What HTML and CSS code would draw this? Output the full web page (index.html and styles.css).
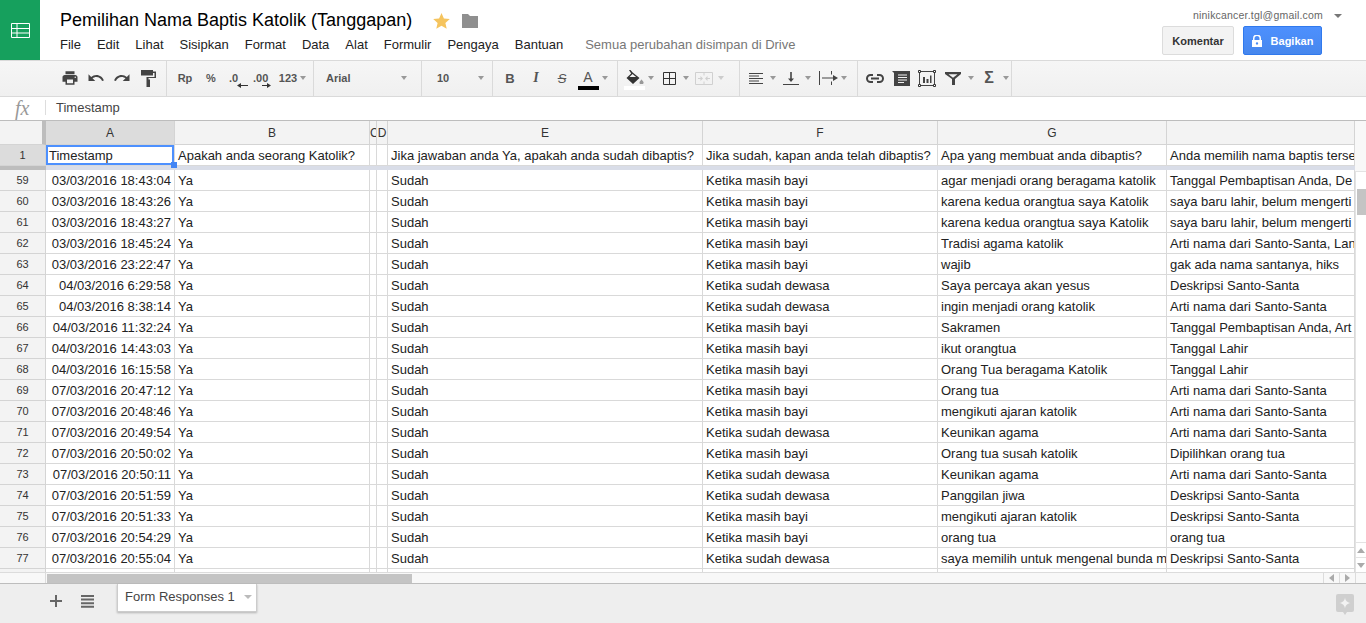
FILE: index.html
```html
<!DOCTYPE html>
<html lang="en">
<head>
    <meta charset="UTF-8">
    <meta name="viewport" content="width=device-width, initial-scale=1.0">
    <title>Pemilihan Nama Baptis Katolik (Tanggapan)</title>
    <link rel="stylesheet" href="styles.css">
</head>
<body>
    <div class="app">
        <!-- Header -->
        <header class="header">
            <div class="logo">
                <svg width="19" height="15" viewBox="0 0 19 15"><path fill="none" stroke="#fff" d="M.5.5h18v14H.5zM.5 5.500h18M.5 10h18M6 .5v14"/></svg>
            </div>
            <div class="title-block">
                <div class="title-row">
                    <h1>Pemilihan Nama Baptis Katolik (Tanggapan)</h1>
                    <svg class="star" width="17" height="16" viewBox="0 0 17 16"><path fill="#f5c45e" d="M8.500 0l2.400 5.400 5.900.6-4.400 3.900 1.300 5.800-5.200-3-5.200 3 1.300-5.800L.2 6l5.900-.6z"/></svg>
                    <svg class="folder" width="16" height="14" viewBox="0 0 16 14"><path fill="#8f8f8f" d="M0 0h6l2 2h8v12H0z"/></svg>
                </div>
                <nav class="menu">
                    <a>File</a>
                    <a>Edit</a>
                    <a>Lihat</a>
                    <a>Sisipkan</a>
                    <a>Format</a>
                    <a>Data</a>
                    <a>Alat</a>
                    <a>Formulir</a>
                    <a>Pengaya</a>
                    <a>Bantuan</a>
                    <span class="save-status">Semua perubahan disimpan di Drive</span>
                </nav>
            </div>
            <div class="account">
                <div class="account-mail">ninikcancer.tgl@gmail.com <i class="caret caret-dark"></i></div>
                <div class="account-buttons">
                    <button class="btn-comment">Komentar</button>
                    <button class="btn-share">
                        <svg width="10" height="12" viewBox="0 0 10 12"><path fill="#fff" d="M1 5V3.500a4 4 0 0 1 8 0V5h1v7H0V5zm1.500 0h5V3.500a2.500 2.500 0 0 0-5 0zM5 7.200a1.200 1.200 0 1 0 0 2.400 1.200 1.200 0 0 0 0-2.400z" fill-rule="evenodd"/></svg>
                        Bagikan
                    </button>
                </div>
            </div>
        </header>

        <!-- Toolbar -->
        <div class="toolbar">
            <div class="tb-group tb-first">
                <span class="tb"><svg width="18" height="18" viewBox="0 0 24 24"><path d="M19 8H5c-1.660 0-3 1.340-3 3v6h4v4h12v-4h4v-6c0-1.660-1.340-3-3-3zm-3 11H8v-5h8v5zm3-7c-.55 0-1-.45-1-1s.45-1 1-1 1 .45 1 1-.45 1-1 1zm-1-9H6v4h12V3z"/></svg></span>
                <span class="tb"><svg width="18" height="18" viewBox="0 0 24 24"><path d="M12.500 8c-2.650 0-5.050.99-6.900 2.600L2 7v9h9l-3.620-3.620c1.390-1.160 3.160-1.880 5.120-1.880 3.540 0 6.550 2.310 7.600 5.500l2.370-.78C21.080 11.030 17.150 8 12.500 8z"/></svg></span>
                <span class="tb"><svg width="18" height="18" viewBox="0 0 24 24"><path d="M18.400 10.600C16.550 8.990 14.150 8 11.500 8c-4.650 0-8.580 3.030-9.960 7.220L3.900 16c1.050-3.190 4.050-5.500 7.600-5.500 1.950 0 3.730.72 5.120 1.880L13 16h9V7l-3.600 3.600z"/></svg></span>
                <span class="tb"><svg width="15" height="17" viewBox="0 0 15 17"><path d="M0 0h12v1.500h3V8H7.500v1.500H9V17H5.500V7H13.500V3H12v2.500H0z"/></svg></span>
            </div>
            <div class="tb-group tb-format">
                <span class="tb tb-text">Rp</span>
                <span class="tb tb-text">%</span>
                <span class="tb tb-dec tb-dec-less">.0<svg width="11" height="5" viewBox="0 0 11 5"><path d="M0 2.500L4 0v2h7v1H4v2z"/></svg></span>
                <span class="tb tb-dec tb-dec-more">.00<svg width="9" height="5" viewBox="0 0 9 5"><path d="M9 2.500L5 0v2H0v1h5v2z"/></svg></span>
                <span class="tb tb-text tb-numfmt">123</span><i class="caret"></i>
            </div>
            <div class="tb-group tb-font"><span class="tb-text">Arial</span><i class="caret"></i></div>
            <div class="tb-group tb-size"><span class="tb-text">10</span><i class="caret"></i></div>
            <div class="tb-group tb-style">
                <span class="tb tb-glyph tb-bold">B</span>
                <span class="tb tb-glyph tb-italic">I</span>
                <span class="tb tb-glyph tb-strike">S</span>
                <span class="tb tb-color"><span class="tb-color-letter">A</span><span class="tb-color-bar tb-bar-black"></span></span><i class="caret"></i>
            </div>
            <div class="tb-group tb-cell">
                <span class="tb tb-color tb-fill">
                    <svg width="18" height="14" viewBox="0 0 18 14"><path fill-rule="evenodd" d="M3 0l1.500 0 2.200 2.400L13.500 8 7 14 .5 8 5.200 3.600zM6.500 4L3.500 7h6.600z"/><path fill="#999" d="M15.500 9.500s2 2 2 3a2 2 0 0 1-4 0c0-1 2-3 2-3z"/></svg>
                    <span class="tb-color-bar tb-bar-white"></span>
                </span><i class="caret"></i>
                <span class="tb"><svg width="13" height="13" viewBox="0 0 13 13"><path fill="none" stroke="#333" d="M.5.5h12v12H.5zM6.500.5v12M.5 6.500h12"/></svg></span><i class="caret"></i>
                <span class="tb tb-off"><svg width="18" height="13" viewBox="0 0 18 13"><path fill="none" stroke="#d0d0d0" d="M.5.5h17v12H.5zM9 .5v3M9 9.500v3M3 6.500h4M11 6.500h4"/><path fill="#d0d0d0" d="M8 6.500L5.500 4v5zM10 6.500L12.500 4v5z"/></svg></span><i class="caret caret-off"></i>
            </div>
            <div class="tb-group tb-align">
                <span class="tb"><svg width="14" height="11" viewBox="0 0 14 11"><path d="M0 0h14v1H0zM0 2.500h10v1H0zM0 5h14v1H0zM0 7.500h10v1H0zM0 10h14v1H0z"/></svg></span><i class="caret"></i>
                <span class="tb"><svg width="16" height="13" viewBox="0 0 16 13"><path d="M7.200 0h1.600v6.500H11L8 10 5 6.500h2.200zM0 12h16v1H0z"/></svg></span><i class="caret"></i>
                <span class="tb tb-wrap"><svg width="19" height="14" viewBox="0 0 19 14"><path d="M0 0h1v14H0zM3 6.400h11V4l5 3-5 3V7.600H3zM12 0h1v3.500h-1zM12 10.500h1V14h-1z"/></svg></span><i class="caret"></i>
            </div>
            <div class="tb-group tb-insert">
                <span class="tb"><svg width="18" height="9" viewBox="0 0 18 9"><path fill="none" stroke="#444" stroke-width="2" d="M7 1H4.500a3.500 3.500 0 0 0 0 7H7M11 1h2.500a3.500 3.500 0 0 1 0 7H11M5 4.500h8"/></svg></span>
                <span class="tb"><svg width="18" height="15" viewBox="0 0 18 15"><path fill-rule="evenodd" d="M0 0l18 0v15H2V2zM6 3.500h9v1H6zM6 6h9v1H6zM6 8.500h9v1H6zM6 11h6v1H6z"/></svg></span>
                <span class="tb"><svg width="18" height="17" viewBox="0 0 18 17"><path fill="none" stroke="#444" d="M1.500 1.500h15v14h-15z"/><path fill="#fff" stroke="#333" d="M.5.5h2v2h-2zM15.500.5h2v2h-2zM.5 14.500h2v2h-2zM15.500 14.500h2v2h-2z"/><path d="M5 7h2v6H5zM8.500 9h2v4h-2zM12 5.500h1.500V13H12z"/></svg></span>
                <span class="tb"><svg width="16" height="13" viewBox="0 0 16 13"><path fill-rule="evenodd" d="M0 0h16v2l-6 5v6H7V7L0 2zM3.500 2.200L8 5.800l4.500-3.600z"/></svg></span><i class="caret caret-gap"></i>
                <span class="tb tb-glyph tb-sigma">Σ</span><i class="caret"></i>
            </div>
        </div>

        <!-- Formula bar -->
        <div class="formula-bar">
            <span class="fx">fx</span>
            <span class="formula-text">Timestamp</span>
        </div>

        <!-- Grid -->
        <div class="grid-area">
            <div class="grid-main">
                <div class="sheet">
                    <table>
                        <colgroup>
                            <col class="col-row"><col class="col-a"><col class="col-b"><col class="col-c"><col class="col-d"><col class="col-e"><col class="col-f"><col class="col-g"><col class="col-h">
                        </colgroup>
                        <thead>
                            <tr>
                                <th class="corner"></th>
                                <th class="col-on">A</th><th>B</th><th>C</th><th>D</th><th>E</th><th>F</th><th>G</th><th></th>
                            </tr>
                        </thead>
                        <tbody>
                            <tr class="row-top">
                                <th class="row-on">1</th>
                                <td class="selected">Timestamp<i class="handle"></i></td>
                                <td>Apakah anda seorang Katolik?</td><td></td><td></td>
                                <td>Jika jawaban anda Ya, apakah anda sudah dibaptis?</td>
                                <td>Jika sudah, kapan anda telah dibaptis?</td>
                                <td>Apa yang membuat anda dibaptis?</td>
                                <td>Anda memilih nama baptis terse</td>
                            </tr>
                            <tr class="freeze"><th></th><td colspan="8"></td></tr>
                            <tr><th>59</th><td class="num">03/03/2016 18:43:04</td><td>Ya</td><td></td><td></td><td>Sudah</td><td>Ketika masih bayi</td><td>agar menjadi orang beragama katolik</td><td>Tanggal Pembaptisan Anda, De</td></tr>
                            <tr><th>60</th><td class="num">03/03/2016 18:43:26</td><td>Ya</td><td></td><td></td><td>Sudah</td><td>Ketika masih bayi</td><td>karena kedua orangtua saya Katolik</td><td>saya baru lahir, belum mengerti</td></tr>
                            <tr><th>61</th><td class="num">03/03/2016 18:43:27</td><td>Ya</td><td></td><td></td><td>Sudah</td><td>Ketika masih bayi</td><td>karena kedua orangtua saya Katolik</td><td>saya baru lahir, belum mengerti</td></tr>
                            <tr><th>62</th><td class="num">03/03/2016 18:45:24</td><td>Ya</td><td></td><td></td><td>Sudah</td><td>Ketika masih bayi</td><td>Tradisi agama katolik</td><td>Arti nama dari Santo-Santa, Lan</td></tr>
                            <tr><th>63</th><td class="num">03/03/2016 23:22:47</td><td>Ya</td><td></td><td></td><td>Sudah</td><td>Ketika masih bayi</td><td>wajib</td><td>gak ada nama santanya, hiks</td></tr>
                            <tr><th>64</th><td class="num">04/03/2016 6:29:58</td><td>Ya</td><td></td><td></td><td>Sudah</td><td>Ketika sudah dewasa</td><td>Saya percaya akan yesus</td><td>Deskripsi Santo-Santa</td></tr>
                            <tr><th>65</th><td class="num">04/03/2016 8:38:14</td><td>Ya</td><td></td><td></td><td>Sudah</td><td>Ketika sudah dewasa</td><td>ingin menjadi orang katolik</td><td>Arti nama dari Santo-Santa</td></tr>
                            <tr><th>66</th><td class="num">04/03/2016 11:32:24</td><td>Ya</td><td></td><td></td><td>Sudah</td><td>Ketika masih bayi</td><td>Sakramen</td><td>Tanggal Pembaptisan Anda, Art</td></tr>
                            <tr><th>67</th><td class="num">04/03/2016 14:43:03</td><td>Ya</td><td></td><td></td><td>Sudah</td><td>Ketika masih bayi</td><td>ikut orangtua</td><td>Tanggal Lahir</td></tr>
                            <tr><th>68</th><td class="num">04/03/2016 16:15:58</td><td>Ya</td><td></td><td></td><td>Sudah</td><td>Ketika masih bayi</td><td>Orang Tua beragama Katolik</td><td>Tanggal Lahir</td></tr>
                            <tr><th>69</th><td class="num">07/03/2016 20:47:12</td><td>Ya</td><td></td><td></td><td>Sudah</td><td>Ketika masih bayi</td><td>Orang tua</td><td>Arti nama dari Santo-Santa</td></tr>
                            <tr><th>70</th><td class="num">07/03/2016 20:48:46</td><td>Ya</td><td></td><td></td><td>Sudah</td><td>Ketika masih bayi</td><td>mengikuti ajaran katolik</td><td>Arti nama dari Santo-Santa</td></tr>
                            <tr><th>71</th><td class="num">07/03/2016 20:49:54</td><td>Ya</td><td></td><td></td><td>Sudah</td><td>Ketika sudah dewasa</td><td>Keunikan agama</td><td>Arti nama dari Santo-Santa</td></tr>
                            <tr><th>72</th><td class="num">07/03/2016 20:50:02</td><td>Ya</td><td></td><td></td><td>Sudah</td><td>Ketika masih bayi</td><td>Orang tua susah katolik</td><td>Dipilihkan orang tua</td></tr>
                            <tr><th>73</th><td class="num">07/03/2016 20:50:11</td><td>Ya</td><td></td><td></td><td>Sudah</td><td>Ketika sudah dewasa</td><td>Keunikan agama</td><td>Arti nama dari Santo-Santa</td></tr>
                            <tr><th>74</th><td class="num">07/03/2016 20:51:59</td><td>Ya</td><td></td><td></td><td>Sudah</td><td>Ketika sudah dewasa</td><td>Panggilan jiwa</td><td>Deskripsi Santo-Santa</td></tr>
                            <tr><th>75</th><td class="num">07/03/2016 20:51:33</td><td>Ya</td><td></td><td></td><td>Sudah</td><td>Ketika masih bayi</td><td>mengikuti ajaran katolik</td><td>Deskripsi Santo-Santa</td></tr>
                            <tr><th>76</th><td class="num">07/03/2016 20:54:29</td><td>Ya</td><td></td><td></td><td>Sudah</td><td>Ketika masih bayi</td><td>orang tua</td><td>orang tua</td></tr>
                            <tr><th>77</th><td class="num">07/03/2016 20:55:04</td><td>Ya</td><td></td><td></td><td>Sudah</td><td>Ketika sudah dewasa</td><td>saya memilih untuk mengenal bunda m</td><td>Deskripsi Santo-Santa</td></tr>
                            <tr><th></th><td></td><td></td><td></td><td></td><td></td><td></td><td></td><td></td></tr>
                        </tbody>
                    </table>
                </div>
                <!-- Vertical scrollbar -->
                <div class="vscroll">
                    <div class="vscroll-head"></div>
                    <div class="vscroll-track"><div class="vscroll-thumb"></div></div>
                    <div class="vscroll-btn"><i class="arrow-up"></i></div>
                    <div class="vscroll-btn"><i class="arrow-down"></i></div>
                </div>
            </div>
            <!-- Horizontal scrollbar -->
            <div class="hscroll">
                <div class="hscroll-left"></div>
                <div class="hscroll-track"><div class="hscroll-thumb"></div></div>
                <div class="hscroll-btn"><i class="arrow-left"></i></div>
                <div class="hscroll-btn"><i class="arrow-right"></i></div>
                <div class="hscroll-corner"></div>
            </div>
        </div>

        <!-- Sheet tabs -->
        <footer class="footer">
            <svg class="add-sheet" width="12" height="12" viewBox="0 0 12 12"><path fill="#666" d="M5 0h2v5h5v2H7v5H5V7H0V5h5z"/></svg>
            <svg class="all-sheets" width="13" height="13" viewBox="0 0 13 13"><path fill="#666" d="M0 0h13v2H0zM0 3.600h13v2H0zM0 7.200h13v2H0zM0 10.800h13v2H0z"/></svg>
            <div class="tab">Form Responses 1 <i class="caret caret-light"></i></div>
            <svg class="explore" width="18" height="21" viewBox="0 0 18 21"><path fill="#cfcfcf" d="M2 0h14a2 2 0 0 1 2 2v14a2 2 0 0 1-2 2h-5l-2 3-2-3H2a2 2 0 0 1-2-2V2a2 2 0 0 1 2-2z"/><path fill="#f2f2f2" d="M9 3.500c.6 3.400 2 4.800 5.500 5.500-3.500.7-4.900 2.100-5.500 5.500C8.400 11.100 7 9.700 3.500 9 7 8.300 8.400 6.900 9 3.500z"/></svg>
        </footer>
    </div>
</body>
</html>
```

FILE: styles.css
```css
/* General Styles */
* {
    box-sizing: border-box;
}

body {
    margin: 0;
    font-family: "Liberation Sans", Arial, sans-serif;
    background: #fff;
    color: #222;
    overflow: hidden;
}

.app {
    display: flex;
    flex-direction: column;
    height: 100vh;
}

/* Carets */
.caret {
    display: inline-block;
    width: 0;
    height: 0;
    border-left: 3.5px solid transparent;
    border-right: 3.5px solid transparent;
    border-top: 4px solid #999;
    flex: none;
}

.caret-dark {
    border-left-width: 4px;
    border-right-width: 4px;
    border-top-color: #777;
    margin-left: 8px;
    vertical-align: 1px;
}

.caret-light {
    border-left-width: 4px;
    border-right-width: 4px;
    border-top-color: #bbb;
    margin-left: 6px;
    vertical-align: 2px;
}

.caret-off {
    border-top-color: #ccc;
}

/* Header */
.header {
    display: flex;
    height: 60px;
    flex: none;
}

.logo {
    width: 40px;
    height: 60px;
    background: #16a05d;
    display: flex;
    align-items: center;
    justify-content: center;
}

.title-block {
    padding-left: 20px;
    flex: 1;
}

.title-row {
    display: flex;
    align-items: center;
    height: 32px;
    padding-top: 9px;
}

.title-row h1 {
    margin: 0;
    font-size: 18px;
    font-weight: 400;
    color: #000;
}

.star {
    margin-left: 21px;
}

.folder {
    margin-left: 12px;
}

.menu {
    display: flex;
    align-items: center;
    gap: 16px;
    height: 24px;
    font-size: 13px;
    color: #222;
}

.save-status {
    margin-left: 6px;
    color: #777;
}

.account {
    width: 204px;
    padding-right: 44px;
    display: flex;
    flex-direction: column;
}

.account-mail {
    height: 26px;
    padding-top: 9px;
    font-size: 10.500px;
    color: #666;
    letter-spacing: 0.2px;
    white-space: nowrap;
    margin-left: 31px;
}

.account-buttons {
    display: flex;
    gap: 9px;
}

.account-buttons button {
    height: 29px;
    border-radius: 2px;
    font-family: inherit;
    font-size: 11px;
    font-weight: 700;
    padding: 0;
}

.btn-comment {
    width: 72px;
    background: #f3f3f3;
    border: 1px solid #dcdcdc;
    color: #333;
}

.btn-share {
    width: 79px;
    background: linear-gradient(#4d90fe, #4787ed);
    border: 1px solid #3079ed;
    color: #fff;
    display: flex;
    align-items: center;
    justify-content: center;
    gap: 9px;
}

/* Toolbar */
.toolbar {
    display: flex;
    height: 37px;
    flex: none;
    background: linear-gradient(#f6f6f6, #f0f0f0);
    border-top: 1px solid #dadada;
    border-bottom: 1px solid #dadada;
    fill: #444;
    font-size: 11px;
}

.tb-group {
    display: flex;
    align-items: center;
    border-right: 1px solid #dadada;
    height: 100%;
    padding-bottom: 1px;
}

.tb {
    width: 26px;
    height: 100%;
    flex: none;
    display: flex;
    align-items: center;
    justify-content: center;
}

.tb-group > .caret {
    margin: 0 2px 0 1px;
}

.tb-text {
    font-weight: 700;
    color: #555;
}

.tb-first {
    width: 167px;
    padding-left: 57px;
}

.tb-format {
    width: 147px;
    padding-left: 5px;
}

.tb-numfmt {
    margin-left: 1px;
    width: 22px;
}

.tb-font {
    width: 108px;
    padding: 0 14px 1px 12px;
    justify-content: space-between;
}

.tb-font .caret,
.tb-size .caret {
    margin: 0;
}

.tb-size {
    width: 71px;
    padding: 0 8px 1px 15px;
    justify-content: space-between;
}

.tb-style {
    width: 125px;
    padding-left: 4px;
}

.tb-cell {
    width: 122px;
    padding-left: 3px;
}

.tb-align {
    width: 118px;
    padding-left: 3px;
}

.tb-wrap {
    margin-left: 3px;
    width: 24px;
}

.tb-insert {
    padding-left: 4px;
}

.tb-glyph {
    font-size: 13px;
    font-weight: 700;
    color: #555;
}

.tb-italic {
    font-family: "Liberation Serif", serif;
    font-style: italic;
    font-size: 14px;
}

.tb-strike {
    text-decoration: line-through;
    font-style: italic;
    font-weight: 400;
}

.tb-sigma {
    font-size: 16px;
}

.tb-dec {
    flex-direction: column;
    align-items: flex-start;
    font-weight: 700;
    color: #555;
    line-height: 11px;
    padding-top: 5px;
}

.tb-dec svg {
    margin-top: -1px;
    fill: #333;
}

.tb-dec-less {
    padding-left: 5px;
}

.tb-dec-less svg {
    margin-left: 8px;
}

.tb-dec-more {
    padding-left: 3px;
}

.tb-dec-more svg {
    margin-left: 9px;
}

.tb-color {
    flex-direction: column;
    padding-top: 3px;
}

.tb-color-letter {
    font-size: 14px;
    line-height: 15px;
    color: #555;
}

.tb-color-bar {
    width: 21px;
    height: 4px;
    margin-top: 1px;
}

.tb-bar-black {
    background: #000;
}

.tb-bar-white {
    background: #fff;
}

.tb-fill {
    fill: #333;
}

.tb-fill svg {
    margin-left: 2px;
}

.tb-fill .tb-color-bar {
    margin-top: 2px;
}

.caret-gap {
    margin-left: 2px !important;
}

/* Formula bar */
.formula-bar {
    display: flex;
    align-items: center;
    height: 24px;
    flex: none;
    border-bottom: 1px solid #bdbdbd;
    padding-bottom: 2px;
}

.fx {
    width: 46px;
    padding-left: 15px;
    font-family: "Liberation Serif", serif;
    font-style: italic;
    font-size: 20px;
    color: #999;
    line-height: 16px;
    position: relative;
}

.fx::after {
    content: "";
    position: absolute;
    right: 0;
    top: 0;
    height: 15px;
    border-right: 1px solid #ddd;
}

.formula-text {
    padding-left: 10px;
    font-size: 13px;
    color: #444;
}

/* Grid */
.grid-area {
    flex: 1;
    display: flex;
    flex-direction: column;
    min-height: 0;
}

.grid-main {
    flex: 1;
    display: flex;
    min-height: 0;
}

.sheet {
    width: 1355px;
    overflow: hidden;
}

table {
    width: 1355px;
    table-layout: fixed;
    border-collapse: separate;
    border-spacing: 0;
    font-size: 13px;
}

.col-row { width: 46px; }
.col-a { width: 129px; }
.col-b { width: 195px; }
.col-c { width: 7px; }
.col-d { width: 11px; }
.col-e { width: 315px; }
.col-f { width: 235px; }
.col-g { width: 229px; }
.col-h { width: 188px; }

th {
    background: #f3f3f3;
    font-size: 11px;
    font-weight: 400;
    color: #333;
    border-right: 1px solid #d4d4d4;
    border-bottom: 1px solid #d4d4d4;
    padding: 0;
    overflow: hidden;
    text-align: center;
}

thead th {
    height: 24px;
    font-size: 12px;
}

.corner {
    border-right: 4px solid #bdbdbd;
    border-left: 0;
}

.col-on,
.row-on {
    background: #dcdcdc;
}

td {
    height: 21px;
    padding: 0 3px;
    border-right: 1px solid #d9d9d9;
    border-bottom: 1px solid #d9d9d9;
    white-space: nowrap;
    overflow: hidden;
    color: #222;
}

.num {
    text-align: right;
}

.row-top td:last-child {
    padding-right: 0;
}

.row-top th {
    height: 21px;
}

td.selected {
    position: relative;
    overflow: visible;
    box-shadow: inset 0 0 0 2px #4d90fe;
}

.handle {
    position: absolute;
    right: -3px;
    bottom: -3px;
    width: 6px;
    height: 6px;
    background: #4285f4;
    box-sizing: content-box;
    z-index: 1;
}

.freeze th {
    height: 4px;
    background: #bdbdbd;
    border: 0;
}

.freeze td {
    height: 4px;
    padding: 0;
    background: #d9dde8;
    border: 0;
}

/* Scrollbars */
.vscroll {
    width: 11px;
    display: flex;
    flex-direction: column;
    background: #fff;
}

.vscroll-head {
    height: 50px;
    background: #f8f8f8;
}

.vscroll-track {
    flex: 1;
    border-left: 1px solid #e3e3e3;
    border-top: 1px solid #e3e3e3;
    padding: 17px 0 0 1px;
}

.vscroll-thumb {
    height: 26px;
    background: #c4c4c4;
}

.vscroll-btn {
    height: 15px;
    border-top: 1px solid #e3e3e3;
    border-left: 1px solid #e3e3e3;
    display: flex;
    align-items: center;
    justify-content: center;
}

.arrow-up,
.arrow-down,
.arrow-left,
.arrow-right {
    width: 0;
    height: 0;
    border: 4px solid transparent;
}

.arrow-up {
    border-bottom: 5px solid #aaa;
    border-top: 0;
}

.arrow-down {
    border-top: 5px solid #aaa;
    border-bottom: 0;
}

.arrow-left {
    border-right: 5px solid #aaa;
    border-left: 0;
}

.arrow-right {
    border-left: 5px solid #aaa;
    border-right: 0;
}

.hscroll {
    display: flex;
    height: 12px;
    flex: none;
    border-top: 1px solid #dcdcdc;
    border-bottom: 1px solid #bdbdbd;
    background: #f8f8f8;
}

.hscroll-left {
    width: 46px;
    border-right: 1px solid #dcdcdc;
}

.hscroll-track {
    width: 1277px;
    padding: 1px 0 0 1px;
}

.hscroll-thumb {
    width: 365px;
    height: 9px;
    background: #c4c4c4;
}

.hscroll-btn {
    width: 16px;
    border-left: 1px solid #dcdcdc;
    display: flex;
    align-items: center;
    justify-content: center;
}

.hscroll-corner {
    flex: 1;
    border-left: 1px solid #dcdcdc;
}

/* Footer */
.footer {
    display: flex;
    align-items: flex-start;
    height: 39px;
    flex: none;
    background: #eee;
    padding-left: 50px;
}

.add-sheet {
    margin-top: 11px;
}

.all-sheets {
    margin: 11px 0 0 19px;
}

.tab {
    width: 140px;
    height: 28px;
    margin-left: 23px;
    background: #fff;
    border: 1px solid #ccc;
    border-top: 0;
    box-shadow: 0 1px 2px rgba(0, 0, 0, 0.25);
    padding: 5px 0 0 7px;
    font-size: 13px;
    color: #444;
}

.explore {
    margin: 10px 12px 0 auto;
}
```
